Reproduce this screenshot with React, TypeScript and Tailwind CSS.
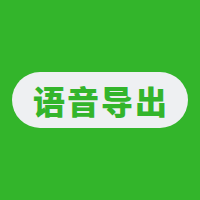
export default function App() {
  return (
    <main className="w-[200px] h-[200px] bg-[#33b52b] flex items-center justify-center">
      <div className="w-[176px] h-[56px] rounded-full bg-[#eef0f2] flex items-center justify-center">
        <span className="text-[32px] leading-none font-black text-[#33b52b] tracking-[2px] pl-[2px] [font-family:'Noto_Sans_CJK_SC',sans-serif]">
          语音导出
        </span>
      </div>
    </main>
  );
}
